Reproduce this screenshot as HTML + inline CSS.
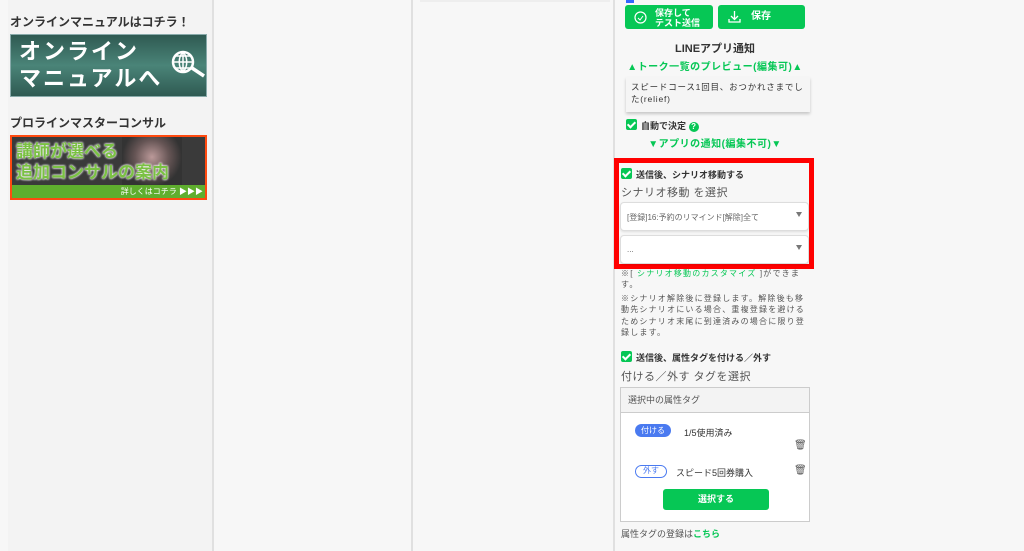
<!DOCTYPE html><html><head><meta charset="utf-8"><style>
*{box-sizing:border-box;margin:0;padding:0}
body{width:1024px;height:551px;overflow:hidden;background:#f7f7f7;font-family:"Liberation Sans","Noto Sans CJK JP",sans-serif;position:relative;color:#333}
.a{position:absolute}
.vl{position:absolute;top:0;height:551px;width:2px;background:#e0e0e0}
.g{color:#06c755}
.btn{position:absolute;background:#06c755;border-radius:3px;color:#fff;font-weight:bold}
.cb{display:inline-block;width:11px;height:11px;background:#06c755;border-radius:2px;vertical-align:-1px;margin-right:4px;position:relative}
.cb:after{content:"";position:absolute;left:3px;top:1px;width:3px;height:6px;border:solid #fff;border-width:0 2px 2px 0;transform:rotate(45deg)}
.sel{position:absolute;left:620px;width:189px;height:29px;background:#fff;border:1px solid #ddd;border-radius:4px;font-size:8px;color:#666;padding:9px 6px;box-shadow:0 1px 2px rgba(0,0,0,.1)}
.sel:after{content:"";position:absolute;right:6px;top:9px;border:3px solid transparent;border-top:5px solid #777}
</style></head><body>
<div class="a" style="left:8px;top:0;width:204px;height:551px;background:#f3f3f3"></div>
<div class="vl" style="left:212px"></div>
<div class="vl" style="left:411px"></div>
<div class="vl" style="left:613px"></div>
<div class="a" style="left:420px;top:0;width:190px;height:2px;background:#eee"></div>
<div class="a" style="left:10px;top:13px;font-size:12px;font-weight:bold;color:#333">オンラインマニュアルはコチラ！</div>
<div class="a" style="left:10px;top:34px;width:197px;height:63px;background:linear-gradient(#2f5a52,#4a8478 50%,#2f5a52);border:1px solid #8aa;color:#fff;font-weight:bold;font-size:22px;line-height:27px;padding:3px 0 0 8px;letter-spacing:2px">オンライン<br>マニュアルへ
<svg class="a" style="left:160px;top:14px" width="38" height="30" viewBox="0 0 38 30"><circle cx="12" cy="13" r="10" fill="none" stroke="#fff" stroke-width="2.5"/><path d="M2 13h20M12 3v20M5 7h14M5 19h14M12 3c-5 5-5 15 0 20M12 3c5 5 5 15 0 20" stroke="#fff" stroke-width="1.5" fill="none"/><path d="M21 19l12 8" stroke="#fff" stroke-width="3.5"/></svg></div>
<div class="a" style="left:10px;top:114px;font-size:12px;font-weight:bold">プロラインマスターコンサル</div>
<div class="a" style="left:10px;top:135px;width:197px;height:65px;background:#3a3a3a;border:2px solid #ff4a10;overflow:hidden">
<div class="a" style="left:110px;top:0;width:60px;height:50px;background:radial-gradient(circle at 50% 40%,#b99 0,#655 40%,#333 70%)"></div>
<div class="a" style="left:4px;top:4px;color:#7ac143;font-weight:bold;font-size:17px;line-height:21px;text-shadow:0 0 2px #fff,0 0 2px #fff">講師が選べる<br>追加コンサルの案内</div>
<div class="a" style="left:0;bottom:0;width:197px;height:13px;background:#5fae2e;color:#fff;font-size:8px;text-align:right;padding-right:6px;line-height:13px">詳しくはコチラ ▶▶▶</div></div>
<div class="a" style="left:626px;top:0;width:8px;height:3px;background:#36f"></div>
<div class="btn" style="left:625px;top:5px;width:88px;height:24px;font-size:9px;line-height:10px;padding:3px 0 0 30px">保存して<br>テスト送信<svg class="a" style="left:9px;top:6px" width="13" height="13"><circle cx="6.5" cy="6.5" r="5.5" fill="none" stroke="#fff" stroke-width="1.2"/><path d="M4 7l2 2 3-4" stroke="#fff" fill="none"/></svg></div>
<div class="btn" style="left:718px;top:5px;width:87px;height:24px;font-size:10px;line-height:24px;padding-left:33px">保存<svg class="a" style="left:10px;top:6px" width="13" height="12"><path d="M6.5 0v8M3 5l3.5 3.5L10 5M1 8v3h11V8" stroke="#fff" fill="none" stroke-width="1.3"/></svg></div>
<div class="a" style="left:615px;top:40px;width:200px;text-align:center;font-size:11px;font-weight:bold">LINEアプリ通知</div>
<div class="a g" style="left:615px;top:58px;width:200px;text-align:center;font-size:10px;font-weight:bold;letter-spacing:.5px">▲トーク一覧のプレビュー(編集可)▲</div>
<div class="a" style="left:626px;top:77px;width:184px;height:35px;background:#f5f5f5;box-shadow:0 2px 3px rgba(0,0,0,.2);font-size:8.5px;line-height:12px;padding:4px 5px;letter-spacing:.8px">スピードコース1回目、おつかれさまでした(relief)</div>
<div class="a" style="left:626px;top:119px;font-size:9px;font-weight:bold"><span class="cb"></span>自動で決定 <span style="display:inline-block;width:10px;height:10px;border-radius:50%;background:#06c755;color:#fff;font-size:8px;text-align:center;line-height:10px">?</span></div>
<div class="a g" style="left:615px;top:135px;width:200px;text-align:center;font-size:10px;font-weight:bold;letter-spacing:.5px">▼アプリの通知(編集不可)▼</div>
<div class="a" style="left:614px;top:158px;width:200px;height:111px;border:5px solid #f00"></div>
<div class="a" style="left:621px;top:168px;font-size:9px;font-weight:bold"><span class="cb"></span>送信後、シナリオ移動する</div>
<div class="a" style="left:621px;top:184px;font-size:11px;color:#555;letter-spacing:.5px">シナリオ移動 を選択</div>
<div class="sel" style="top:202px">[登録]16:予約のリマインド[解除]全て</div>
<div class="sel" style="top:235px">...</div>
<div class="a" style="left:621px;top:268px;width:186px;font-size:8px;line-height:11px;color:#555;letter-spacing:1.2px">※[ <span class="g">シナリオ移動のカスタマイズ</span> ]ができます。</div>
<div class="a" style="left:621px;top:293px;width:188px;font-size:8px;line-height:11.3px;color:#555;letter-spacing:1.2px">※シナリオ解除後に登録します。解除後も移動先シナリオにいる場合、重複登録を避けるためシナリオ末尾に到達済みの場合に限り登録します。</div>
<div class="a" style="left:621px;top:351px;font-size:9px;font-weight:bold"><span class="cb"></span>送信後、属性タグを付ける／外す</div>
<div class="a" style="left:621px;top:368px;font-size:11px;color:#555;letter-spacing:.5px">付ける／外す タグを選択</div>
<div class="a" style="left:620px;top:387px;width:190px;height:135px;border:1px solid #ccc;background:#fff">
<div style="height:25px;background:#f3f3f3;border-bottom:1px solid #ccc;font-size:9px;color:#555;line-height:24px;padding-left:7px">選択中の属性タグ</div>
<div class="a" style="left:14px;top:36px;width:36px;height:13px;border-radius:7px;background:#4a7af0;color:#fff;font-size:8px;text-align:center;line-height:13px">付ける</div>
<div class="a" style="left:63px;top:38px;font-size:9px">1/5使用済み</div>
<div class="a" style="left:14px;top:77px;width:32px;height:13px;border-radius:7px;border:1.5px solid #4a7af0;color:#4a7af0;font-size:8px;text-align:center;line-height:10px">外す</div>
<div class="a" style="left:55px;top:78px;font-size:9px">スピード5回券購入</div>
<div class="a" style="left:173px;top:52px;font-size:10px;color:#555">🗑</div>
<div class="a" style="left:173px;top:77px;font-size:10px;color:#555">🗑</div>
<div class="btn" style="left:42px;top:101px;width:106px;height:21px;font-size:9px;text-align:center;line-height:21px">選択する</div></div>
<div class="a" style="left:621px;top:527px;font-size:9px;color:#555">属性タグの登録は<b class="g">こちら</b></div>
</body></html>
